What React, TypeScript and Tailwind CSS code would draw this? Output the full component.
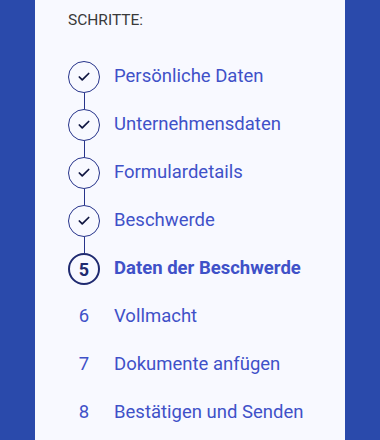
import { Check } from "lucide-react";

type Step = { label: string; state: "done" | "active" | "todo" };

const steps: Step[] = [
  { label: "Persönliche Daten", state: "done" },
  { label: "Unternehmensdaten", state: "done" },
  { label: "Formulardetails", state: "done" },
  { label: "Beschwerde", state: "done" },
  { label: "Daten der Beschwerde", state: "active" },
  { label: "Vollmacht", state: "todo" },
  { label: "Dokumente anfügen", state: "todo" },
  { label: "Bestätigen und Senden", state: "todo" },
];

export default function App() {
  return (
    <div className="w-[380px] h-[440px] bg-[#2a4aab] flex overflow-hidden font-['Roboto',sans-serif]">
      <div className="ml-[35px] w-[310px] h-full bg-[#f8f9ff] pl-[33px]">
        {/* Header */}
        <div className="pt-[10px] text-[15.5px] leading-[20px] text-[#3a3a3a]">
          SCHRITTE:
        </div>

        {/* Steps */}
        <ul className="mt-[23px] flex flex-col">
          {steps.map((step, i) => {
            const prevLinked = i > 0 && steps[i - 1].state === "done";
            const nextLinked = step.state === "done";
            return (
              <li key={step.label} className="h-12 flex items-center">
                <div className="w-8 h-12 flex flex-col items-center">
                  <div className={`h-2 w-px ${prevLinked ? "bg-[#27348b]" : ""}`} />
                  {step.state === "done" && (
                    <div className="w-8 h-8 rounded-full border border-[#27348b] flex items-center justify-center">
                      <Check className="w-[14px] h-[14px] text-[#0f1540]" strokeWidth={3} />
                    </div>
                  )}
                  {step.state === "active" && (
                    <div className="w-8 h-8 rounded-full border-2 border-[#1f2a70] flex items-center justify-center text-[18px] font-bold text-[#1f2a70]">
                      {i + 1}
                    </div>
                  )}
                  {step.state === "todo" && (
                    <div className="w-8 h-8 flex items-center justify-center text-[18.5px] text-[#3f51c8]">
                      {i + 1}
                    </div>
                  )}
                  <div className={`h-2 w-px ${nextLinked ? "bg-[#27348b]" : ""}`} />
                </div>
                <span
                  className={`ml-[14px] text-[18.5px] text-[#3f51c8] ${
                    step.state === "active" ? "font-bold" : ""
                  }`}
                >
                  {step.label}
                </span>
              </li>
            );
          })}
        </ul>
      </div>
    </div>
  );
}
